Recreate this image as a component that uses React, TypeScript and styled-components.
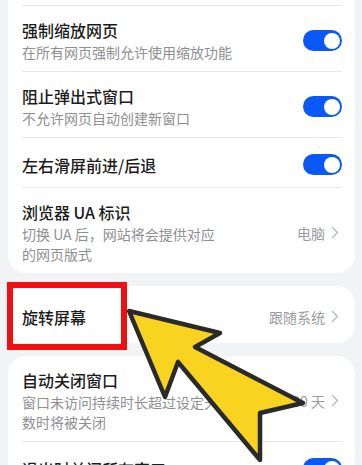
import React from "react";
import styled, { createGlobalStyle } from "styled-components";

const GlobalStyle = createGlobalStyle`
  html, body {
    margin: 0;
    padding: 0;
    background: #f1f3f5;
  }
  body {
    font-family: "Noto Sans CJK SC", "Noto Sans", sans-serif;
  }
`;

type Item = {
  title: string;
  desc?: string;
  value?: string;
  toggle?: boolean;
};

const mainItems: Item[] = [
  { title: "强制缩放网页", desc: "在所有网页强制允许使用缩放功能", toggle: true },
  { title: "阻止弹出式窗口", desc: "不允许网页自动创建新窗口", toggle: true },
  { title: "左右滑屏前进/后退", toggle: true },
  { title: "浏览器 UA 标识", desc: "切换 UA 后，网站将会提供对应的网页版式", value: "电脑" },
];

const windowItems: Item[] = [
  { title: "自动关闭窗口", desc: "窗口未访问持续时长超过设定天数时将被关闭", value: "30 天" },
  { title: "退出时关闭所有窗口", toggle: true },
];

const Chevron = () => (
  <svg width="8" height="13" viewBox="0 0 8 13">
    <polyline
      points="1.5,1.5 6.5,6.5 1.5,11.5"
      fill="none"
      stroke="#b8b9bb"
      strokeWidth="1.4"
      strokeLinecap="round"
      strokeLinejoin="round"
    />
  </svg>
);

const SettingRow: React.FC<{ item: Item; minH?: number }> = ({ item, minH }) => (
  <Row $minH={minH ?? 50}>
    <TextBlock $narrow={!!item.value}>
      <Title>{item.title}</Title>
      {item.desc && <Desc>{item.desc}</Desc>}
    </TextBlock>
    {item.toggle && (
      <Toggle>
        <Knob />
      </Toggle>
    )}
    {item.value && (
      <Value>
        <span>{item.value}</span>
        <Chevron />
      </Value>
    )}
  </Row>
);

const App: React.FC = () => (
  <>
    <GlobalStyle />
    <Screen>
      <Card $flushTop>
        {mainItems.map((it) => (
          <SettingRow key={it.title} item={it} />
        ))}
      </Card>
      <Card>
        <SettingRow item={{ title: "旋转屏幕", value: "跟随系统" }} minH={57} />
      </Card>
      <Card>
        {windowItems.map((it) => (
          <SettingRow key={it.title} item={it} />
        ))}
      </Card>

      <HighlightBox />
      <Arrow viewBox="0 0 362 465" width="362" height="465">
        <polygon
          points="129,311 220,333 195,347 303,403 260,413 260,460 178,362 165,397"
          fill="#f8d320"
          stroke="#2a2a2a"
          strokeWidth="4.5"
          strokeLinejoin="round"
        />
      </Arrow>
    </Screen>
  </>
);

const Screen = styled.div`
  position: relative;
  width: 362px;
  height: 465px;
  overflow: hidden;
  box-sizing: border-box;
  padding: 0 7px 0 8px;
  display: flex;
  flex-direction: column;
  gap: 13px;
  background: #f1f3f5;
`;

const Row = styled.div<{ $minH: number }>`
  display: flex;
  align-items: center;
  gap: 12px;
  box-sizing: border-box;
  min-height: ${(p) => p.$minH}px;
  margin: 0 13px 0 14px;
  padding: 13px 0 9px;

  & + & {
    border-top: 1px solid #e7e8ea;
  }
`;

const Card = styled.div<{ $flushTop?: boolean }>`
  flex-shrink: 0;
  background: #ffffff;
  border-radius: ${(p) => (p.$flushTop ? "0 0 18px 18px" : "18px")};
  padding-top: ${(p) => (p.$flushTop ? "5px" : "0")};

  ${(p) =>
    p.$flushTop &&
    `
    & > ${Row}:first-child {
      border-top: 1px solid #e7e8ea;
    }
  `}
`;

const TextBlock = styled.div<{ $narrow: boolean }>`
  flex: 1;
  min-width: 0;
  max-width: ${(p) => (p.$narrow ? "206px" : "none")};
  margin-right: auto;
`;

const Title = styled.div`
  font-size: 16px;
  line-height: 22px;
  font-weight: 500;
  color: #1c1c1c;
`;

const Desc = styled.div`
  margin-top: 1px;
  font-size: 14px;
  line-height: 20px;
  color: #8e8f91;
`;

const Toggle = styled.div`
  flex-shrink: 0;
  width: 39px;
  height: 21px;
  box-sizing: border-box;
  padding: 2.5px;
  border-radius: 11px;
  background: #0a59f7;
  display: flex;
  justify-content: flex-end;
`;

const Knob = styled.div`
  width: 16px;
  height: 16px;
  border-radius: 50%;
  background: #ffffff;
`;

const Value = styled.div`
  flex-shrink: 0;
  display: flex;
  align-items: center;
  gap: 6px;
  font-size: 14px;
  line-height: 20px;
  color: #9a9b9d;
  margin-right: 3px;
`;

const HighlightBox = styled.div`
  position: absolute;
  left: 7px;
  top: 282px;
  width: 120px;
  height: 68px;
  box-sizing: border-box;
  border: 6px solid #f20f10;
`;

const Arrow = styled.svg`
  position: absolute;
  left: 0;
  top: 0;
  pointer-events: none;
`;

export default App;
